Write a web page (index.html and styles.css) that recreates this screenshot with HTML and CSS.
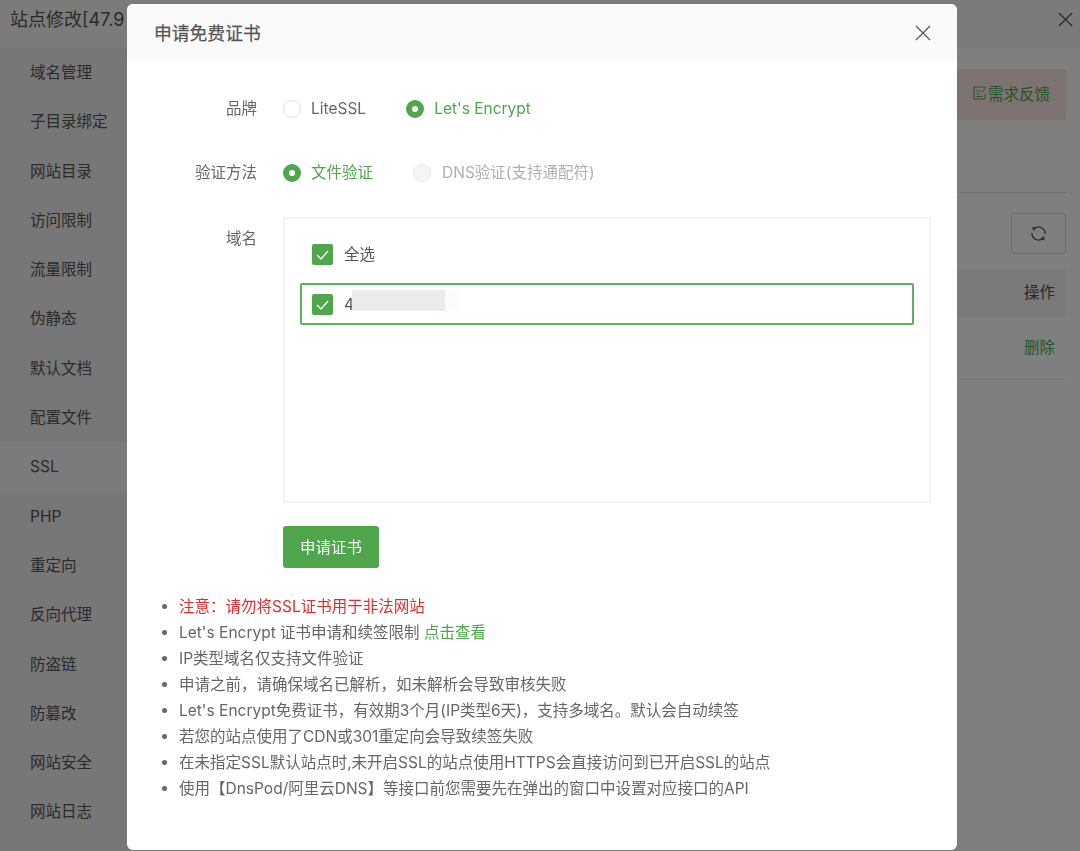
FILE: index.html
```html
<!DOCTYPE html>
<html lang="zh-CN">
<head>
<meta charset="utf-8">
<title>申请免费证书</title>
<link rel="stylesheet" href="styles.css">
</head>
<body>
<div class="page">
  <header class="page-head">
    <span class="page-title">站点修改[47.9</span>
    <svg class="page-close" viewBox="0 0 16 16"><path d="M1 1l14 14M15 1L1 15"/></svg>
  </header>
  <div class="page-body">
    <nav class="side">
      <a class="side-item">域名管理</a>
      <a class="side-item">子目录绑定</a>
      <a class="side-item">网站目录</a>
      <a class="side-item">访问限制</a>
      <a class="side-item">流量限制</a>
      <a class="side-item">伪静态</a>
      <a class="side-item">默认文档</a>
      <a class="side-item">配置文件</a>
      <a class="side-item active">SSL</a>
      <a class="side-item">PHP</a>
      <a class="side-item">重定向</a>
      <a class="side-item">反向代理</a>
      <a class="side-item">防盗链</a>
      <a class="side-item">防篡改</a>
      <a class="side-item">网站安全</a>
      <a class="side-item">网站日志</a>
    </nav>
    <main class="content">
      <div class="feedback">
        <svg class="note-icon" viewBox="0 0 14 14"><path d="M12.500 1H1v12h11V8M3.500 5h4M3.500 8h3M3.500 10.500h6M8.500 6.500l4.500-5"/></svg>
        <span>需求反馈</span>
      </div>
      <div class="rule"></div>
      <div class="tools">
        <button class="refresh">
          <svg viewBox="0 0 18 18"><path d="M4.500 3.800A7 7 0 0 1 16 9.500M13.500 14.200A7 7 0 0 1 2 8.500"/><path class="head" d="M2.500 2l4.500 .8L3.300 6.300zM15.500 16l-4.500-.8 3.700-3.500z"/></svg>
        </button>
      </div>
      <div class="table-head"><span>操作</span></div>
      <div class="table-row"><span class="del">删除</span></div>
    </main>
  </div>
</div>
<div class="mask"></div>
<section class="modal">
  <header class="modal-head">
    <h1 class="modal-title">申请免费证书</h1>
    <svg class="modal-close" viewBox="0 0 16 16"><path d="M1 1l14 14M15 1L1 15"/></svg>
  </header>
  <div class="modal-body">
    <div class="form-row row-brand">
      <div class="label">品牌</div>
      <div class="radios">
        <span class="radio"><i class="dot"></i>LiteSSL</span>
        <span class="radio on"><i class="dot"></i>Let's Encrypt</span>
      </div>
    </div>
    <div class="form-row row-method">
      <div class="label">验证方法</div>
      <div class="radios">
        <span class="radio on"><i class="dot"></i>文件验证</span>
        <span class="radio off"><i class="dot"></i>DNS验证(支持通配符)</span>
      </div>
    </div>
    <div class="form-row row-domain">
      <div class="label label-top">域名</div>
      <div class="domains">
        <div class="domain-all">
          <span class="check"><svg viewBox="0 0 21 21"><path d="M5 11l4 4 7-8"/></svg></span>
          <span class="domain-text">全选</span>
        </div>
        <div class="domain-item">
          <span class="check"><svg viewBox="0 0 21 21"><path d="M5 11l4 4 7-8"/></svg></span>
          <span class="domain-text">4</span>
          <span class="redact"></span><span class="redact faint"></span>
        </div>
      </div>
    </div>
    <div class="submit-row"><button class="submit">申请证书</button></div>
    <ul class="notes">
      <li class="danger">注意：请勿将SSL证书用于非法网站</li>
      <li>Let's Encrypt 证书申请和续签限制 <a class="link">点击查看</a></li>
      <li>IP类型域名仅支持文件验证</li>
      <li>申请之前，请确保域名已解析，如未解析会导致审核失败</li>
      <li>Let's Encrypt免费证书，有效期3个月(IP类型6天)，支持多域名。默认会自动续签</li>
      <li>若您的站点使用了CDN或301重定向会导致续签失败</li>
      <li>在未指定SSL默认站点时,未开启SSL的站点使用HTTPS会直接访问到已开启SSL的站点</li>
      <li>使用【DnsPod/阿里云DNS】等接口前您需要先在弹出的窗口中设置对应接口的API</li>
    </ul>
  </div>
</section>
</body>
</html>
```
FILE: styles.css
```css
* { box-sizing: border-box; }
html, body { margin: 0; height: 100%; overflow: hidden; }
body {
  font-family: Inter, "Noto Sans CJK SC", sans-serif;
  font-size: 15.5px;
  color: #666;
  background: #fff;
}
.page { height: 851px; display: flex; flex-direction: column; background: #fff; }
.page-head {
  height: 48px; flex: none; display: flex; align-items: flex-start; justify-content: space-between;
  background: #f7f7f7; padding: 8px 7px 0 10px; border-bottom: 1px solid #f2f2f2;
}
.page-title { font-size: 18px; line-height: 24px; color: #555; white-space: nowrap; }
.page-close { width: 15px; height: 15px; margin-top: 4px; fill: none; stroke: #555; stroke-width: 1.4; }
.page-body { flex: 1; display: flex; min-height: 0; }
.side { width: 200px; flex: none; background: #eeeeee; display: flex; flex-direction: column; }
.side-item { height: 49.3px; flex: none; line-height: 49px; padding-left: 30px; color: #555; }
.side-item.active { background: #f6f6f6; }
.content { flex: 1; padding: 21px 14px 0 20px; display: flex; flex-direction: column; align-items: stretch; }
.feedback {
  height: 51px; display: flex; align-items: center; justify-content: flex-end; gap: 1px;
  background: #fbe6e6; border-radius: 2px; padding: 0 16px 4px 0; color: #52a852;
}
.note-icon { width: 14px; height: 14px; fill: none; stroke: #52a852; stroke-width: 1; }
.rule { height: 1px; background: #e6e6f0; margin-top: 72px; }
.tools { display: flex; justify-content: flex-end; margin-top: 20px; }
.refresh {
  width: 55px; height: 41px; padding: 0; background: #fff; border: 1px solid #ddd; border-radius: 3px;
  display: flex; align-items: center; justify-content: center;
}
.refresh svg { width: 17px; height: 17px; fill: none; stroke: #555; stroke-width: 1.4; }
.refresh .head { fill: #555; stroke: none; }
.table-head {
  height: 47px; margin-top: 15px; background: #f4f4f4; border-bottom: 1px solid #eee;
  display: flex; align-items: center; justify-content: flex-end; padding: 0 11px 2px 0; color: #555;
}
.table-row {
  height: 64px; border-bottom: 1px solid #eee;
  display: flex; align-items: center; justify-content: flex-end; padding: 0 11px 3px 0;
}
.del { color: #52a852; }
.mask { position: fixed; inset: 0; background: rgba(0, 0, 0, .5); }
.modal {
  position: fixed; left: 127px; top: 4px; width: 830px; height: 846px;
  background: #fff; border-radius: 6px; overflow: hidden;
}
.modal-head {
  height: 57px; display: flex; align-items: center; justify-content: space-between;
  padding: 0 26px 2px 27px; background: #fafafa;
}
.modal-title { margin: 0; font-size: 17.8px; font-weight: 400; color: #555; -webkit-text-stroke: .25px #555; }
.modal-close { width: 16px; height: 16px; margin-top: 2px; fill: none; stroke: #555; stroke-width: 1.2; }
.modal-body { padding: 0 26px 0 0; }
.form-row { display: flex; }
.label { width: 130px; flex: none; text-align: right; line-height: 22px; color: #666; }
.row-brand { margin-top: 37px; }
.row-method { margin-top: 42px; }
.row-domain { margin-top: 33px; }
.label-top { margin-top: 11px; }
.radios { display: flex; margin-left: 26px; gap: 40px; }
.radio { display: flex; align-items: center; gap: 10px; line-height: 22px; color: #666; white-space: nowrap; }
.dot { width: 18px; height: 18px; flex: none; border-radius: 50%; background: #fff; border: 1px solid #dcdfe6; }
.radio.on { color: #4fa64d; }
.radio.on .dot { background: #fff; border: 6px solid #4fa64d; }
.radio.off { color: #b0b0b0; gap: 11px; }
.radio.off .dot { background: #f5f5f7; border-color: #e4e7ed; }
.domains { margin-left: 26px; flex: 1; height: 286px; border: 2px solid #f3f3f8; padding: 25px 15px 0; }
.domain-all { height: 21px; display: flex; align-items: center; padding-left: 12px; gap: 11px; }
.domain-item {
  height: 42px; margin-top: 18px; border: 2px solid #62af5f; border-radius: 2px;
  display: flex; align-items: flex-start; padding: 9px 0 0 10px; gap: 11px;
}
.domain-text { line-height: 21px; color: #555; }
.check { width: 21px; height: 21px; flex: none; background: #4fa64d; border-radius: 2px; display: block; }
.check svg { display: block; width: 21px; height: 21px; fill: none; stroke: #fff; stroke-width: 1.2; }
.redact { width: 93px; height: 21px; margin: -4px 0 0 -13px; background: #e9ecea; flex: none; }
.redact.faint { width: 15px; margin-left: -11px; background: #fafbfa; }
.submit-row { padding-left: 156px; margin-top: 23px; }
.submit {
  width: 96px; height: 42px; border: 0; border-radius: 3px; padding: 0 0 3px; background: #4fa64d; color: #fff;
  font: inherit; display: block;
}
.notes { margin: 26px 0 0; padding: 0 0 0 52px; line-height: 26px; color: #666; }
.notes li { white-space: nowrap; }
.notes li::marker { color: #666; }
.danger { color: #dc2f2f; }
.link { color: #4fa64d; }
```
